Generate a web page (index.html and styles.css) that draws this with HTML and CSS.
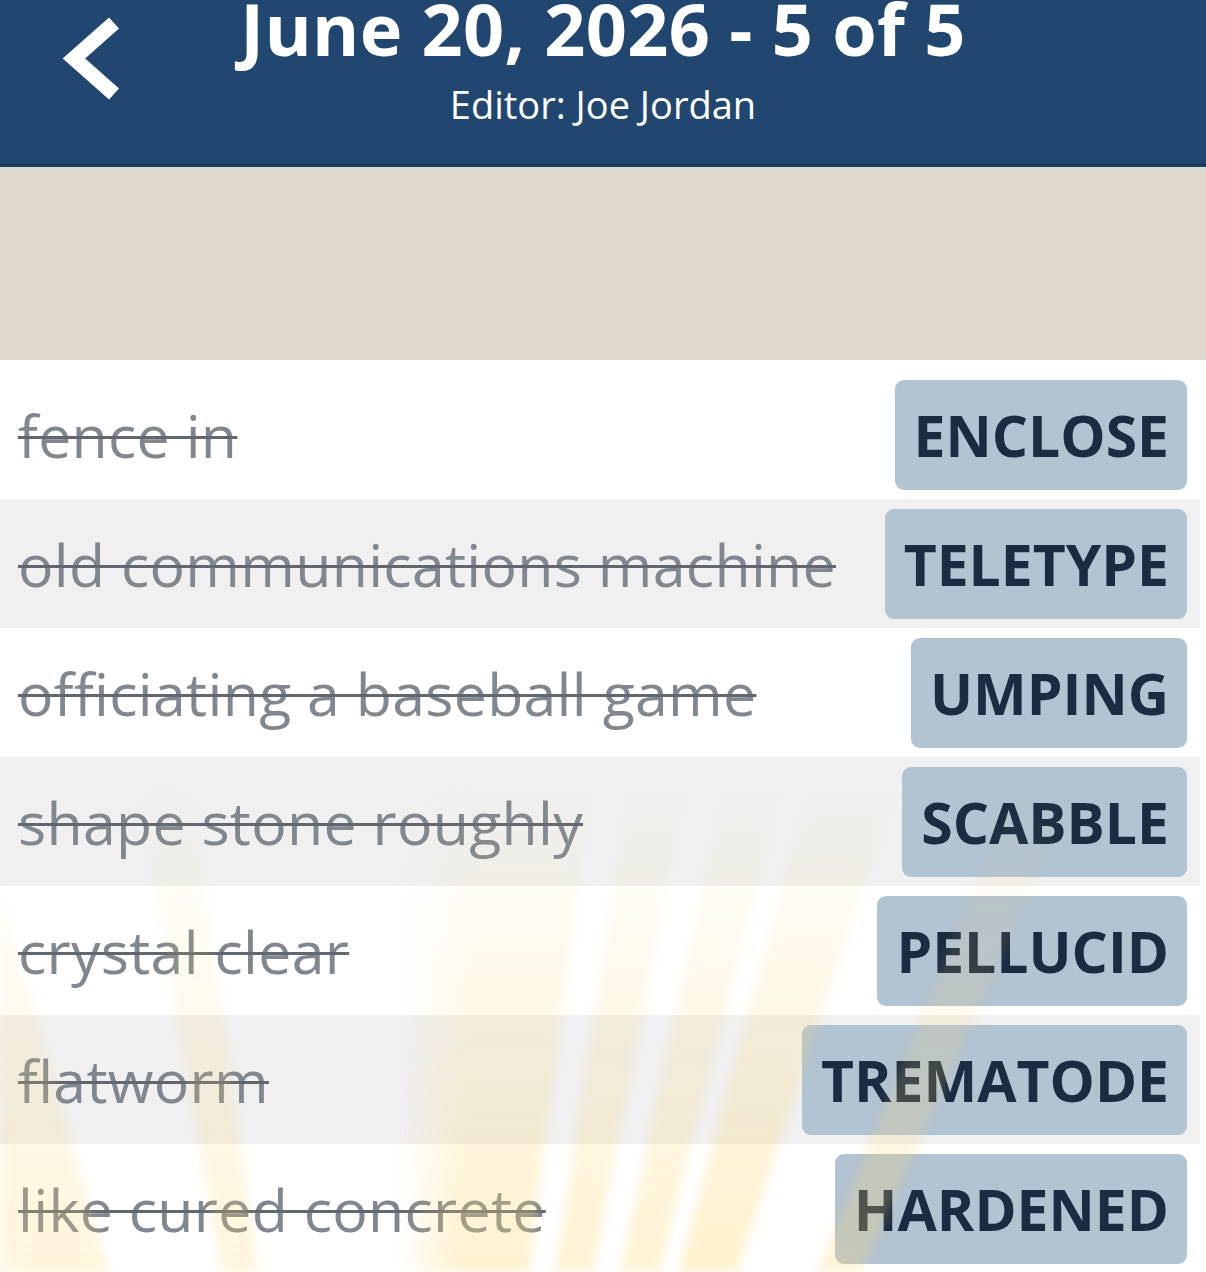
FILE: index.html
```html
<!DOCTYPE html>
<html lang="en">
<head>
<meta charset="utf-8">
<title>June 20, 2026 - 5 of 5</title>
<link rel="stylesheet" href="styles.css">
</head>
<body>
<div class="page">
  <header class="topbar">
    <div class="back-cell">
      <svg class="back" width="60" height="88" viewBox="0 0 60 88" aria-label="Back">
        <polyline points="52,8 12,43.5 52,79" fill="none" stroke="#ffffff" stroke-width="15" stroke-linejoin="miter"/>
      </svg>
    </div>
    <div class="titles">
      <h1 class="title">June 20, 2026 - 5 of 5</h1>
      <p class="subtitle">Editor: Joe Jordan</p>
    </div>
    <div></div>
  </header>
  <div class="banner"></div>
  <ul class="list">
    <li class="row"><span class="clue">fence in</span><span class="answer">ENCLOSE</span></li>
    <li class="row alt"><span class="clue">old communications machine</span><span class="answer">TELETYPE</span></li>
    <li class="row"><span class="clue">officiating a baseball game</span><span class="answer">UMPING</span></li>
    <li class="row alt"><span class="clue">shape stone roughly</span><span class="answer">SCABBLE</span></li>
    <li class="row"><span class="clue">crystal clear</span><span class="answer">PELLUCID</span></li>
    <li class="row alt"><span class="clue">flatworm</span><span class="answer">TREMATODE</span></li>
    <li class="row"><span class="clue">like cured concrete</span><span class="answer">HARDENED</span></li>
  </ul>
  <div class="rays"></div>
</div>
</body>
</html>
```
FILE: styles.css
```css
* { box-sizing: border-box; }
html, body {
  margin: 0;
  padding: 0;
  background: #ffffff;
}
body {
  font-family: "Open Sans", "Noto Sans", sans-serif;
  overflow: hidden;
}
.page {
  position: relative;
  width: 1206px;
  height: 1272px;
  overflow: hidden;
  background: #ffffff;
}
.topbar {
  height: 167px;
  background: #21466f;
  border-bottom: 4px solid #1c3b5d;
  display: grid;
  grid-template-columns: 1fr auto 1fr;
  color: #ffffff;
}
.back-cell {
  padding-left: 62px;
  padding-top: 15px;
}
.back { display: block; }
.titles {
  display: flex;
  flex-direction: column;
  align-items: center;
}
.title {
  margin: -8px 0 0 0;
  font-size: 72px;
  line-height: 72px;
  font-weight: 700;
  white-space: nowrap;
  letter-spacing: 0.3px;
}
.subtitle {
  margin: 21px 0 0 0;
  font-size: 38px;
  line-height: 38px;
  font-weight: 400;
  white-space: nowrap;
}
.banner {
  height: 193px;
  background: #ded8cd;
  border-top: 3px solid #d9d9d6;
}
.list {
  list-style: none;
  margin: 0;
  padding: 10px 0 0 0;
}
.row {
  width: 1200px;
  height: 129px;
  display: flex;
  align-items: center;
  justify-content: space-between;
  padding: 0 13px 0 18px;
  background: #ffffff;
}
.row.alt { background: #f0f0f0; }
.clue {
  font-size: 59px;
  color: #80878f;
  text-decoration: line-through;
  text-decoration-color: #5f6771;
  text-decoration-thickness: 3px;
  white-space: nowrap;
  letter-spacing: 0.3px;
}
.answer {
  height: 110px;
  display: flex;
  align-items: center;
  padding: 0 18px 0 19px;
  background: #b2c3d2;
  border-radius: 9px;
  color: #1b2b42;
  font-size: 57px;
  font-weight: 700;
  white-space: nowrap;
}
.rays {
  position: absolute;
  left: 0;
  top: 780px;
  width: 1206px;
  height: 492px;
  pointer-events: none;
  filter: blur(5px);
  background: conic-gradient(from 0deg at 400px 1520px,
    transparent 0deg,
    rgba(252, 214, 110, 0.32) 3deg, rgba(252, 214, 110, 0.32) 7deg,
    transparent 7.3deg, transparent 8.5deg,
    rgba(252, 214, 110, 0.3) 8.7deg, rgba(252, 214, 110, 0.3) 10.5deg,
    transparent 10.8deg, transparent 12deg,
    rgba(252, 214, 110, 0.3) 12.2deg, rgba(252, 214, 110, 0.3) 14deg,
    transparent 14.3deg, transparent 15deg,
    rgba(252, 214, 110, 0.34) 15.3deg, rgba(252, 214, 110, 0.34) 18deg,
    transparent 18.3deg, transparent 22deg,
    rgba(252, 214, 110, 0.28) 22.2deg, rgba(252, 214, 110, 0.28) 24deg,
    transparent 24.3deg, transparent 336deg,
    rgba(252, 214, 110, 0.25) 340deg, rgba(252, 214, 110, 0.25) 344deg,
    transparent 344.3deg, transparent 350deg,
    rgba(252, 214, 110, 0.25) 350.3deg, rgba(252, 214, 110, 0.25) 352deg,
    transparent 352.3deg);
  -webkit-mask-image: linear-gradient(to bottom, transparent 0%, rgba(0,0,0,0.4) 35%, rgba(0,0,0,1) 100%);
  mask-image: linear-gradient(to bottom, transparent 0%, rgba(0,0,0,0.4) 35%, rgba(0,0,0,1) 100%);
}
```
